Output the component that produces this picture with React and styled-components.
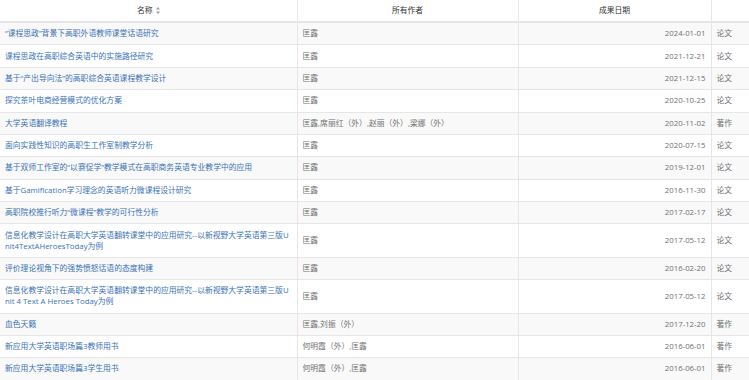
import React from "react";
import styled, { createGlobalStyle } from "styled-components";

const GlobalStyle = createGlobalStyle`
  html, body {
    margin: 0;
    padding: 0;
    background: #fff;
    overflow: hidden;
  }
  body {
    font-family: "Open Sans", "Noto Sans CJK SC", sans-serif;
  }
`;

const Table = styled.table`
  width: 762px;
  table-layout: fixed;
  border-collapse: collapse;
  font-size: 7.8px;
  line-height: 11px;
`;

const Col = styled.col`
  width: ${({ w }) => w}px;
`;

const Th = styled.th`
  height: 21px;
  padding: 0 5px;
  font-weight: normal;
  color: #333;
  text-align: center;
  border-left: 1px solid #e6e6e6;
  border-bottom: 2px solid #e6e6e6;
  &:first-child {
    border-left: none;
  }
`;

const SortIcon = styled.svg`
  margin-left: 3px;
  vertical-align: -1px;
`;

const Row = styled.tr`
  background: ${({ striped }) => (striped ? "#f9f9f9" : "#fff")};
`;

const Td = styled.td`
  padding: 5.2px 5px;
  border-left: 1px solid #e6e6e6;
  border-bottom: 1px solid #e6e6e6;
  color: ${({ tone }) => (tone === "link" ? "#3a72b5" : "#707070")};
  text-align: ${({ align }) => align || "left"};
  word-break: break-all;
  vertical-align: middle;
  &:first-child {
    border-left: none;
  }
`;

const rows = [
  ["“课程思政”背景下高职外语教师课堂话语研究", "匡露", "2024-01-01", "论文"],
  ["课程思政在高职综合英语中的实施路径研究", "匡露", "2021-12-21", "论文"],
  ["基于“产出导向法”的高职综合英语课程教学设计", "匡露", "2021-12-15", "论文"],
  ["探究茶叶电商经营模式的优化方案", "匡露", "2020-10-25", "论文"],
  ["大学英语翻译教程", "匡露,席丽红（外）,赵丽（外）,梁娜（外）", "2020-11-02", "著作"],
  ["面向实践性知识的高职生工作室制教学分析", "匡露", "2020-07-15", "论文"],
  ["基于双师工作室的“以赛促学”教学模式在高职商务英语专业教学中的应用", "匡露", "2019-12-01", "论文"],
  ["基于Gamification学习理念的英语听力微课程设计研究", "匡露", "2016-11-30", "论文"],
  ["高职院校推行听力“微课程”教学的可行性分析", "匡露", "2017-02-17", "论文"],
  ["信息化教学设计在高职大学英语翻转课堂中的应用研究--以新视野大学英语第三版Unit4TextAHeroesToday为例", "匡露", "2017-05-12", "论文"],
  ["评价理论视角下的强势愤怒话语的态度构建", "匡露", "2016-02-20", "论文"],
  ["信息化教学设计在高职大学英语翻转课堂中的应用研究--以新视野大学英语第三版Unit 4 Text A Heroes Today为例", "匡露", "2017-05-12", "论文"],
  ["血色天籁", "匡露,刘振（外）", "2017-12-20", "著作"],
  ["新应用大学英语职场篇3教师用书", "何明霞（外）,匡露", "2016-06-01", "著作"],
  ["新应用大学英语职场篇3学生用书", "何明霞（外）,匡露", "2016-06-01", "著作"],
];

const App = () => (
  <>
    <GlobalStyle />
    <Table>
      <colgroup>
        <Col w={297} />
        <Col w={221} />
        <Col w={193} />
        <Col w={51} />
      </colgroup>
      <thead>
        <tr>
          <Th>
            名称
            <SortIcon width="4" height="7" viewBox="0 0 4 7">
              <path d="M2 0 L4 2.6 H0 Z M2 7 L4 4.4 H0 Z" fill="#9a9a9a" />
            </SortIcon>
          </Th>
          <Th>所有作者</Th>
          <Th>成果日期</Th>
          <Th />
        </tr>
      </thead>
      <tbody>
        {rows.map(([title, authors, date, kind], i) => (
          <Row key={i} striped={i % 2 === 0}>
            <Td tone="link">{title}</Td>
            <Td>{authors}</Td>
            <Td align="right">{date}</Td>
            <Td>{kind}</Td>
          </Row>
        ))}
      </tbody>
    </Table>
  </>
);

export default App;
